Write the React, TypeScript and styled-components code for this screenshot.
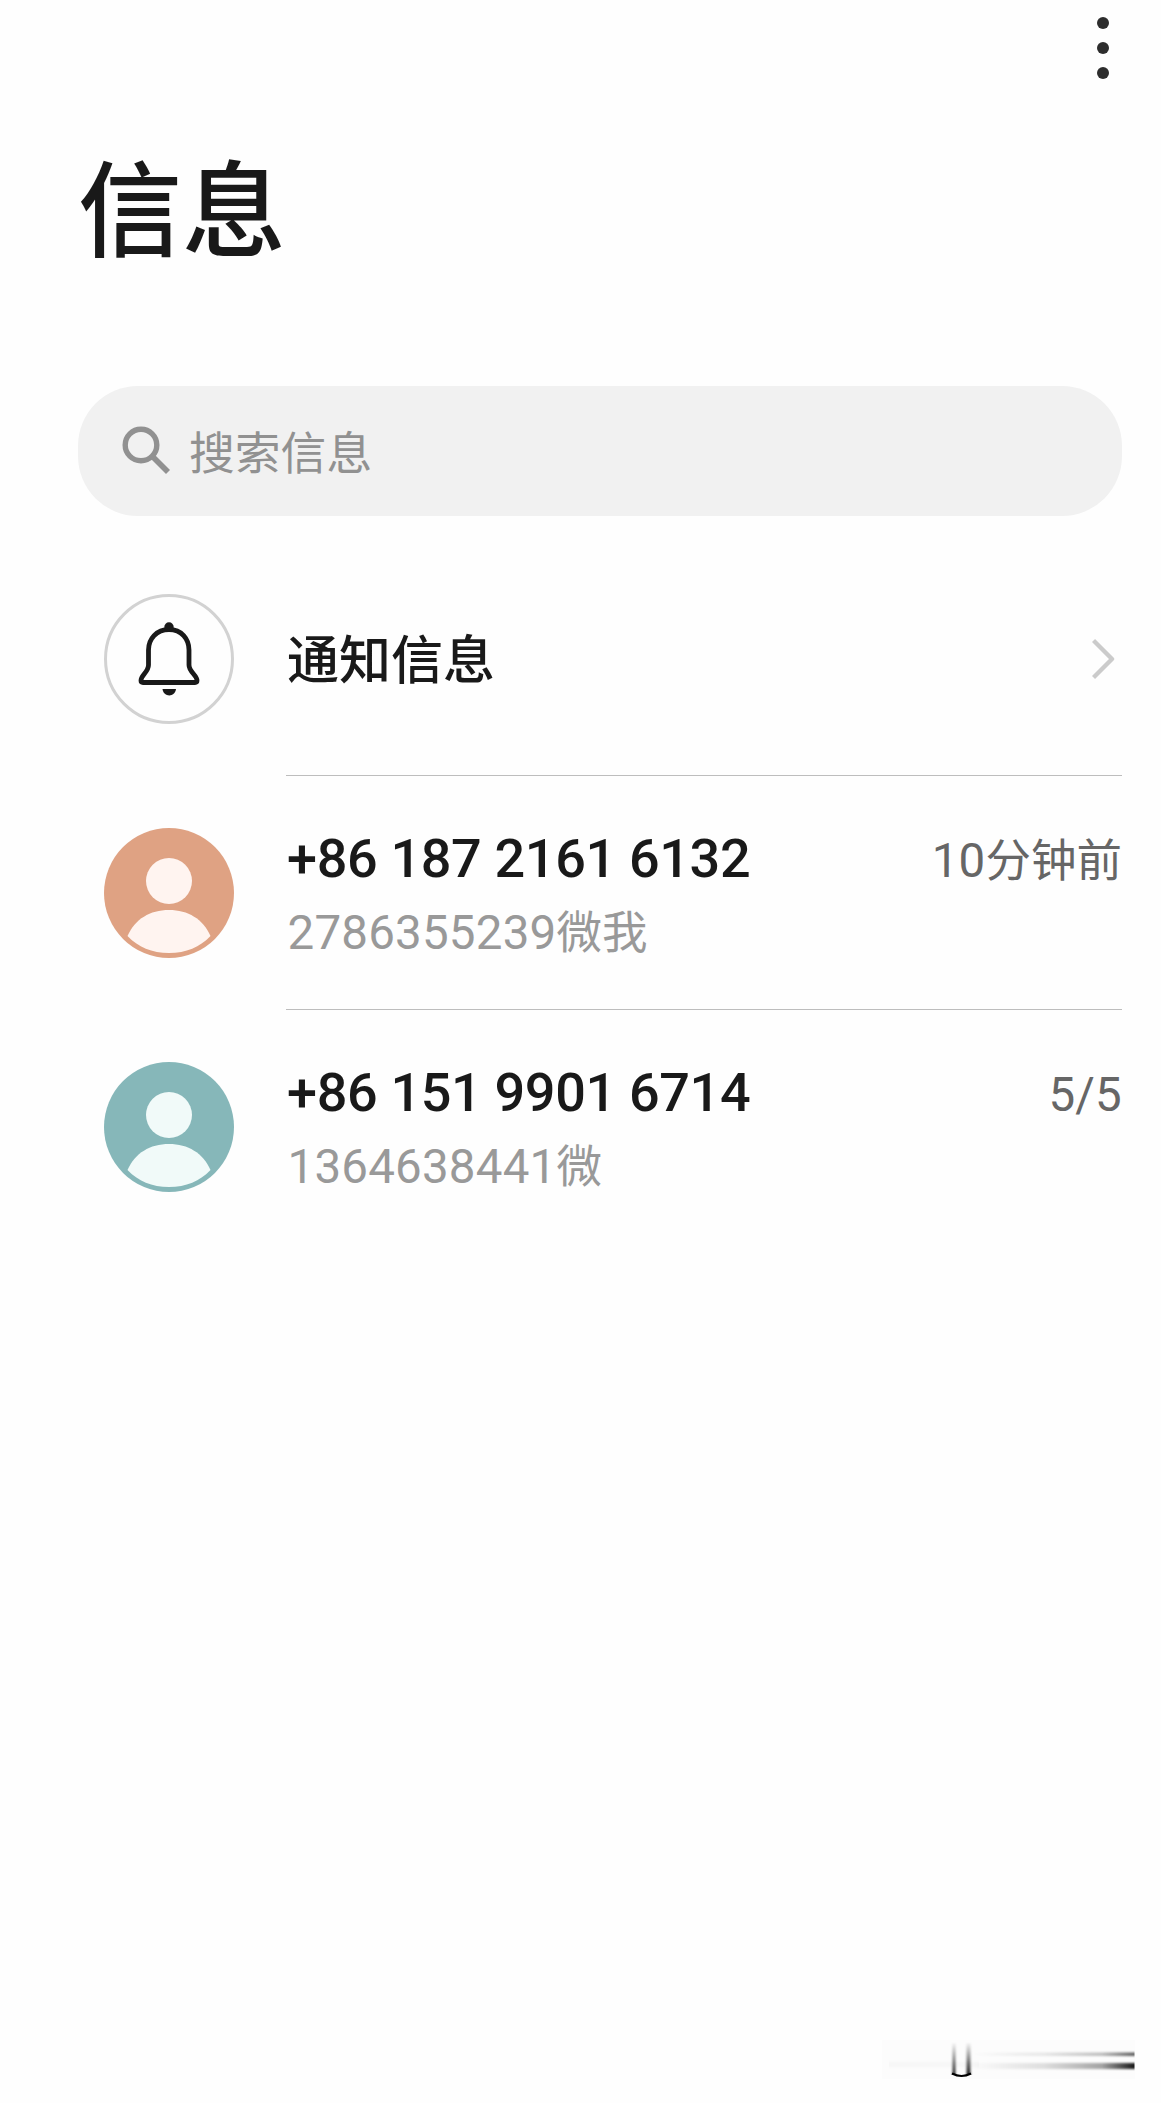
import React from "react";
import styled, { createGlobalStyle } from "styled-components";

const GlobalStyle = createGlobalStyle`
  body {
    margin: 0;
    background: #fefefe;
  }
`;

const Screen = styled.main`
  box-sizing: border-box;
  width: 1161px;
  height: 2103px;
  display: flex;
  flex-direction: column;
  overflow: hidden;
  background: #fefefe;
  color: #191919;
  font-family: "Noto Sans CJK SC", "Noto Sans", sans-serif;
`;

const Toolbar = styled.header`
  display: flex;
  justify-content: flex-end;
  height: 96px;
  padding: 17px 52px 0 0;
  box-sizing: border-box;
`;

const MenuButton = styled.button`
  display: flex;
  flex-direction: column;
  gap: 13px;
  height: 64px;
  padding: 0;
  border: 0;
  background: none;
`;

const Dot = styled.span`
  width: 12px;
  height: 12px;
  border-radius: 50%;
  background: #2d2d2d;
`;

const Title = styled.h1`
  margin: 0;
  height: 290px;
  padding: 46px 0 0 78px;
  box-sizing: border-box;
  font-size: 104px;
  font-weight: 500;
  line-height: 124px;
`;

const SearchBar = styled.div`
  display: flex;
  align-items: center;
  gap: 19px;
  height: 130px;
  margin: 0 39px 26px 78px;
  padding: 0 0 3px 43px;
  box-sizing: border-box;
  border-radius: 60px;
  background: #f1f1f1;
`;

const SearchHint = styled.span`
  color: #919191;
  font-size: 45.8px;
  line-height: 64px;
`;

const List = styled.ul`
  margin: 0;
  padding: 0 39px 0 104px;
  list-style: none;
`;

const Row = styled.li`
  display: flex;
  align-items: center;
  gap: 52px;
  height: 234px;
`;

const RowBody = styled.div<{ $divided?: boolean }>`
  flex: 1;
  display: flex;
  align-items: center;
  justify-content: space-between;
  height: 234px;
  box-sizing: border-box;
  border-bottom: 1px solid ${(p) => (p.$divided ? "#bdbdbd" : "transparent")};
`;

const BellCircle = styled.div`
  flex: none;
  display: flex;
  align-items: center;
  justify-content: center;
  width: 130px;
  height: 130px;
  box-sizing: border-box;
  border: 3px solid #d2d2d2;
  border-radius: 50%;
`;

const Heading = styled.span`
  padding: 0 0 3px 1px;
  font-size: 52px;
  font-weight: 500;
  line-height: 72px;
`;

const Lines = styled.div`
  flex: 1;
  display: flex;
  flex-direction: column;
  gap: 6px;
`;

const Line = styled.div`
  display: flex;
  justify-content: space-between;
  align-items: center;
  height: 66px;
`;

const Sender = styled.span`
  padding: 5px 0 0 1px;
  font-family: Roboto, sans-serif;
  font-size: 54px;
  font-weight: 460;
  letter-spacing: -0.35px;
  line-height: 66px;
  white-space: nowrap;
`;

const Small = styled.span<{ $color: string; $indent?: number }>`
  padding-left: ${(p) => p.$indent ?? 0}px;
  color: ${(p) => p.$color};
  font-size: 45.5px;
  line-height: 66px;
  white-space: nowrap;
`;

const Digits = styled.span`
  font-family: Roboto, sans-serif;
  font-size: 47.5px;
  letter-spacing: 0.2px;
  line-height: 1;
`;

const Footer = styled.footer`
  display: flex;
  justify-content: flex-end;
  margin-top: auto;
  padding: 0 24px 20px 0;
`;

const Mixed = ({ text }: { text: string }) => (
  <>
    {text
      .split(/([0-9/]+)/)
      .filter(Boolean)
      .map((part, i) =>
        /^[0-9/]/.test(part) ? <Digits key={i}>{part}</Digits> : part
      )}
  </>
);

const SearchIcon = () => (
  <svg width="49" height="49" viewBox="0 0 49 49" fill="none" stroke="#919191">
    <circle cx="20" cy="20" r="15.8" strokeWidth="5.4" />
    <path d="M31.5 31.5 47 47" strokeWidth="5.6" />
  </svg>
);

const BellIcon = () => (
  <svg width="62" height="74" viewBox="0 0 62 74" fill="none">
    <path
      d="M31 7.5C18.500 7.500 10.500 17 10.500 28V43C10.500 50 3 53 3 58.500Q3 60.500 5 60.500H57Q59 60.500 59 58.500C59 53 51 50 51 43V28C51 17 43.500 7.500 31 7.500Z"
      stroke="#191919"
      strokeWidth="4.8"
      strokeLinejoin="round"
    />
    <circle cx="31" cy="5" r="4.7" fill="#191919" />
    <path d="M24.500 67H38C37 75.500 25.500 75.500 24.500 67Z" fill="#191919" />
  </svg>
);

const ChevronIcon = () => (
  <svg width="30" height="42" viewBox="0 0 30 42" fill="none">
    <path d="M1.5 2.500 20 21 1.500 39.500" stroke="#cbcbcb" strokeWidth="4.4" strokeLinejoin="round" />
  </svg>
);

const AvatarSvg = styled.svg`
  flex: none;
  display: block;
`;

const Avatar = ({ color, figure }: { color: string; figure: string }) => (
  <AvatarSvg width="130" height="130" viewBox="0 0 130 130">
    <circle cx="65" cy="65" r="65" fill={color} />
    <circle cx="65" cy="53" r="23" fill={figure} />
    <path d="M23.5 108C31 91 46 82 65 82S99 91 106.500 108C96 119 82 125 65 125S34 119 23.500 108Z" fill={figure} />
  </AvatarSvg>
);

const Streaks = () => (
  <svg width="256" height="44" viewBox="0 0 256 44">
    <defs>
      <linearGradient id="fadeX" x1="0" x2="1" y1="0" y2="0">
        <stop offset="0" stopColor="#000" stopOpacity="0" />
        <stop offset="0.45" stopColor="#000" stopOpacity="0.12" />
        <stop offset="0.8" stopColor="#000" stopOpacity="0.35" />
        <stop offset="1" stopColor="#000" stopOpacity="0.9" />
      </linearGradient>
      <linearGradient id="fadeY" x1="0" x2="0" y1="0" y2="1">
        <stop offset="0" stopColor="#000" stopOpacity="0" />
        <stop offset="0.5" stopColor="#000" stopOpacity="0.45" />
        <stop offset="1" stopColor="#000" stopOpacity="0.9" />
      </linearGradient>
      <filter id="soft" x="-5%" y="-60%" width="110%" height="220%">
        <feGaussianBlur stdDeviation="0 1.1" />
      </filter>
      <filter id="softX" x="-60%" y="-5%" width="220%" height="110%">
        <feGaussianBlur stdDeviation="0.9 0" />
      </filter>
    </defs>
    <rect x="1" y="1" width="253" height="39" fill="#000" fillOpacity="0.008" />
    <rect x="8" y="22.500" width="90" height="6" fill="#000" fillOpacity="0.02" filter="url(#soft)" />
    <rect x="90" y="13.500" width="163.500" height="3.500" fill="url(#fadeX)" opacity="0.7" filter="url(#soft)" />
    <rect x="90" y="24" width="163.500" height="6" fill="url(#fadeX)" filter="url(#soft)" />
    <rect x="71.500" y="3" width="3" height="33" fill="url(#fadeY)" filter="url(#softX)" />
    <rect x="85.500" y="3" width="4" height="33" fill="url(#fadeY)" filter="url(#softX)" />
    <path d="M71 34.500Q80.500 39.500 90 34.500" fill="none" stroke="#000" strokeWidth="2" />
  </svg>
);

const messages = [
  {
    sender: "+86 187 2161 6132",
    preview: "2786355239微我",
    time: "10分钟前",
    color: "#dfa283",
    figure: "#fff4f0",
  },
  {
    sender: "+86 151 9901 6714",
    preview: "1364638441微",
    time: "5/5",
    color: "#86b7b9",
    figure: "#f1faf9",
  },
];

export default function App() {
  return (
    <>
      <GlobalStyle />
      <Screen>
        <Toolbar>
          <MenuButton>
            <Dot />
            <Dot />
            <Dot />
          </MenuButton>
        </Toolbar>
        <Title>信息</Title>
        <SearchBar>
          <SearchIcon />
          <SearchHint>搜索信息</SearchHint>
        </SearchBar>
        <List>
          <Row>
            <BellCircle>
              <BellIcon />
            </BellCircle>
            <RowBody $divided>
              <Heading>通知信息</Heading>
              <ChevronIcon />
            </RowBody>
          </Row>
          {messages.map((m, i) => (
            <Row key={m.sender}>
              <Avatar color={m.color} figure={m.figure} />
              <RowBody $divided={i < messages.length - 1}>
                <Lines>
                  <Line>
                    <Sender>{m.sender}</Sender>
                    <Small $color="#666666">
                      <Mixed text={m.time} />
                    </Small>
                  </Line>
                  <Line>
                    <Small $color="#999999" $indent={1.5}>
                      <Mixed text={m.preview} />
                    </Small>
                  </Line>
                </Lines>
              </RowBody>
            </Row>
          ))}
        </List>
        <Footer>
          <Streaks />
        </Footer>
      </Screen>
    </>
  );
}
